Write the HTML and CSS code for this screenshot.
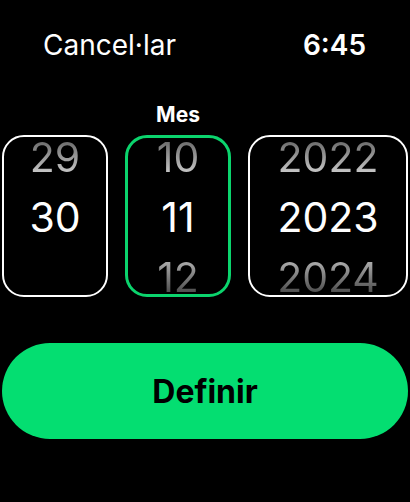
FILE: index.html
```html
<!DOCTYPE html>
<html>
<head>
  <title>Data</title>
  <link rel="stylesheet" href="styles.css">
</head>
<body>
  <div class="header">
    <span class="cancel">Cancel·lar</span>
    <span class="time">6:45</span>
  </div>

  <div class="pickers">
    <div class="label">Mes</div>

    <div class="wheel day">
      <div class="item prev">29</div>
      <div class="item">30</div>
      <div class="item"></div>
    </div>
    <div class="wheel month active">
      <div class="item prev">10</div>
      <div class="item">11</div>
      <div class="item next">12</div>
    </div>
    <div class="wheel year">
      <div class="item prev">2022</div>
      <div class="item">2023</div>
      <div class="item next">2024</div>
    </div>
  </div>

  <button class="set">Definir</button>
</body>
</html>
```

FILE: styles.css
```css
body {
  margin: 0;
  background-color: #000;
  color: #fff;
  font-family: Inter, "Noto Sans", sans-serif;
  width: 410px;
  height: 502px;
  overflow: hidden;
}
.header {
  display: flex;
  justify-content: space-between;
  padding: 26px 44px 0 43px;
  font-size: 28px;
  line-height: 38px;
}
.time {
  font-weight: 600;
}
.pickers {
  display: grid;
  grid-template-columns: 106px 106px 1fr;
  column-gap: 17px;
  row-gap: 7px;
  padding: 38px 2px 0 2px;
}
.label {
  grid-column: 2;
  text-align: center;
  font-weight: 700;
  font-size: 21px;
  line-height: 26px;
}
.wheel {
  height: 156px;
  border: 2px solid #fff;
  border-radius: 22px;
  overflow: hidden;
  display: flex;
  flex-direction: column;
  justify-content: center;
  align-items: center;
  gap: 16px;
  padding-top: 2px;
  box-sizing: content-box;
  font-size: 41px;
}
.day {
  grid-column: 1;
}
.active {
  height: 154px;
  border: 3px solid #0bd46d;
}
.item {
  height: 44px;
  line-height: 44px;
  flex-shrink: 0;
}
.prev {
  background: linear-gradient(#5a5a5a, #d8d8d8);
  -webkit-background-clip: text;
  background-clip: text;
  color: transparent;
}
.next {
  background: linear-gradient(#c0c0c0, #3a3a3a);
  -webkit-background-clip: text;
  background-clip: text;
  color: transparent;
}
.set {
  display: block;
  margin: 46px 2px 0 2px;
  width: 406px;
  height: 96px;
  border: none;
  border-radius: 48px;
  background-color: #04de71;
  color: #000;
  font-family: Inter, "Noto Sans", sans-serif;
  font-weight: 700;
  font-size: 32px;
}
```
